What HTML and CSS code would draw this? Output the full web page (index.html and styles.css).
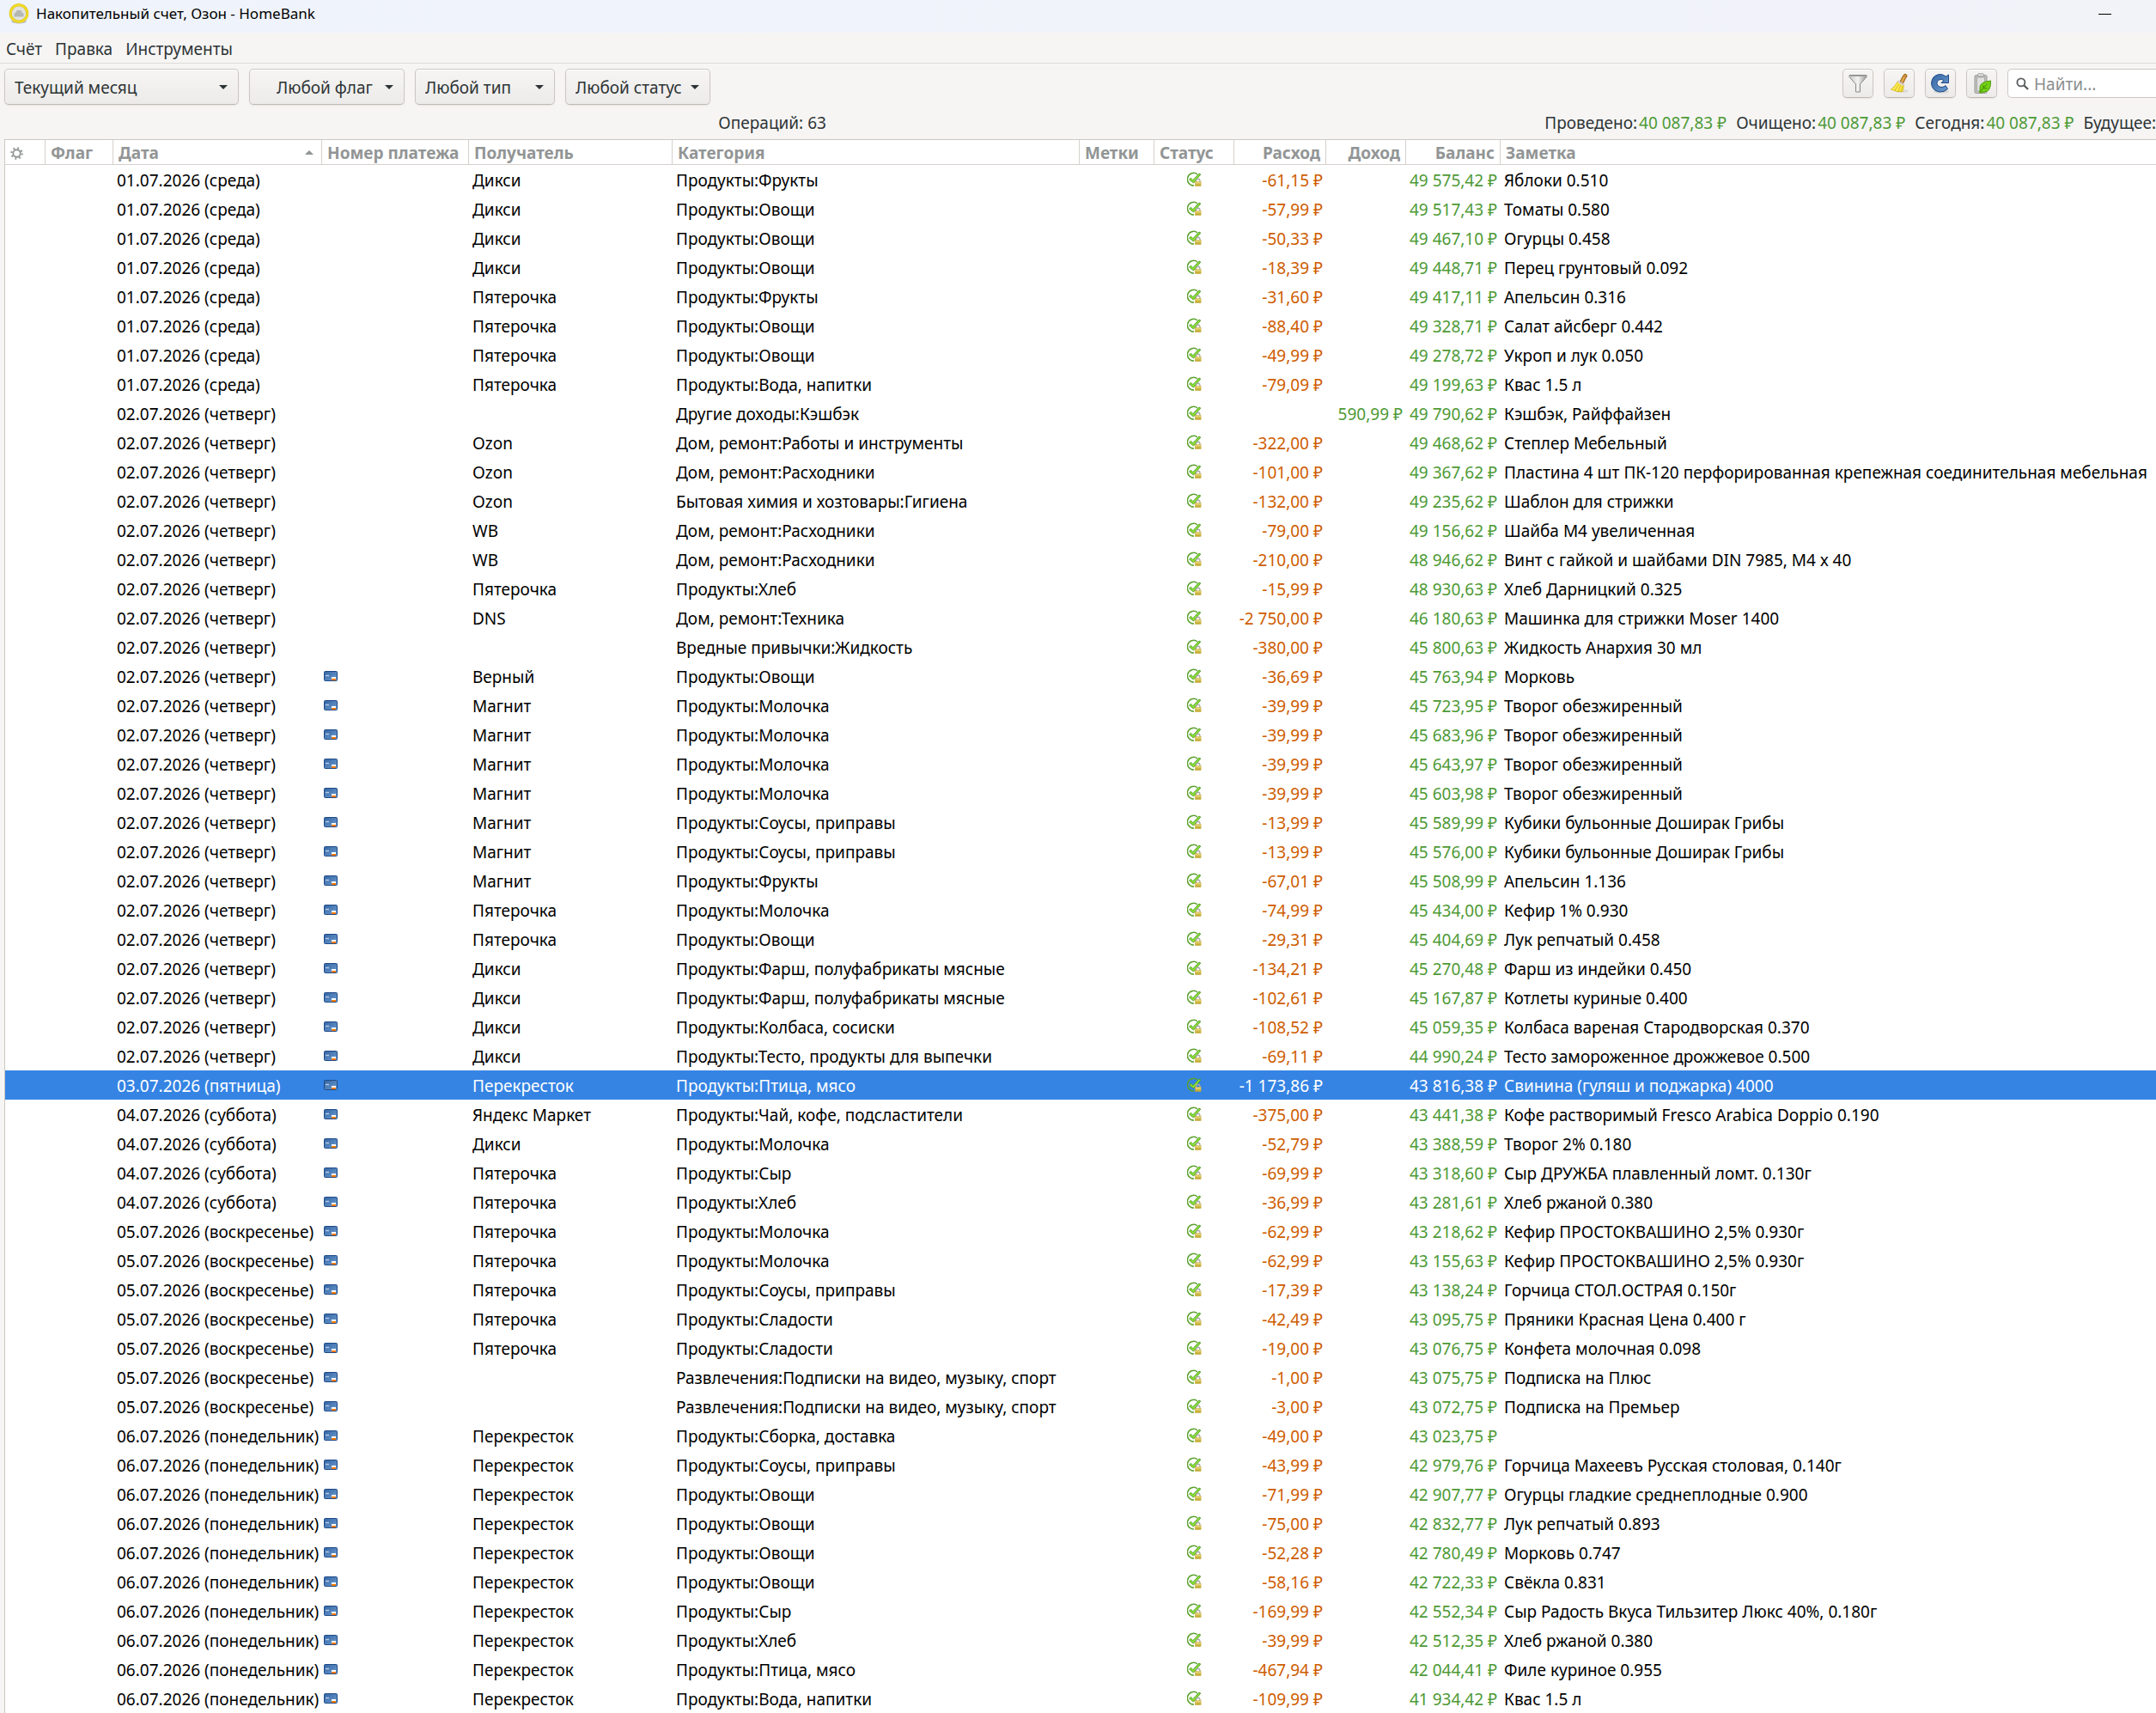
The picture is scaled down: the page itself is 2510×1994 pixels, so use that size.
FILE: index.html
```
<!DOCTYPE html>
<html lang="ru">

<head>
  <meta charset="UTF-8">
  <meta name="viewport" content="width=device-width, initial-scale=1">
  <title>Накопительный счет, Озон - HomeBank</title>
  <link rel="stylesheet" href="styles.css">
</head>

<body>
  <svg class="sprite" aria-hidden="true">
    <defs>
      <linearGradient id="blue" x1="0" y1="0" x2="1" y2="1">
        <stop offset="0" stop-color="#3465a4" />
        <stop offset="1" stop-color="#6d9ccf" />
      </linearGradient>
      <linearGradient id="steel" x1="0" y1="0" x2="1" y2="0">
        <stop offset="0" stop-color="#c8cac6" />
        <stop offset=".5" stop-color="#f4f4f2" />
        <stop offset="1" stop-color="#9a9c98" />
      </linearGradient>
      <linearGradient id="gold" x1="0" y1="0" x2="0" y2="1">
        <stop offset="0" stop-color="#f0e08a" />
        <stop offset="1" stop-color="#b8a01c" />
      </linearGradient>
    </defs>
    <symbol id="card" viewBox="0 0 16 12">
      <rect x=".5" y=".5" width="15" height="11" rx="1" fill="url(#blue)" stroke="#204a87" />
      <path d="M2 5.5h4" stroke="#b4cbe6" stroke-width="1.5" />
      <rect x="9" y="7" width="5" height="2" fill="#fff" />
      <rect x="9" y="9" width="5" height="2" fill="#f57900" />
    </symbol>
    <symbol id="check" viewBox="0 0 18 18">
      <path d="M12 2.800A7.300 7.300 0 1 0 8 16" fill="none" stroke="#5aa02c" stroke-width="1.500" />
      <path d="M2.500 9L4.500 7.300l2.300 2.400L14 2l1.800 1L7.500 13z" fill="#8ae234" stroke="#4e9a26" stroke-width=".9" />
      <path d="M10.500 12V10.500a2.200 2.200 0 0 1 4.400 0V12" fill="none" stroke="#a8a8a4" stroke-width="1.400" />
      <rect x="9.300" y="11.500" width="6.800" height="5" fill="url(#gold)" stroke="#c4a83a" stroke-width=".5" />
    </symbol>
  </svg>

  <header class="titlebar">
    <svg class="logo" viewBox="0 0 24 24">
      <ellipse cx="12" cy="21" rx="9" ry="2.500" fill="#c3c6cb" />
      <circle cx="12" cy="11.500" r="9.800" fill="#e2e3e0" stroke="#c9ae10" stroke-width="3" />
      <circle cx="12" cy="11.500" r="9.800" fill="none" stroke="#f2dc26" stroke-width="2.400" />
      <path d="M6.500 15.500v-4l2-1 1-2.500h5l1 2.500 2 1v4z" fill="#b5b7b3" />
    </svg>
    <h1>Накопительный счет, Озон - HomeBank</h1>
    <button class="minimize" aria-label="Свернуть"></button>
  </header>

  <nav class="menu">
    <a href="#">Счёт</a>
    <a href="#">Правка</a>
    <a href="#">Инструменты</a>
  </nav>

  <div class="toolbar">
    <div class="combo range"><select aria-label="Период"><option>Текущий месяц</option></select></div>
    <div class="combo flag"><select aria-label="Флаг"><option>Любой флаг</option></select></div>
    <div class="combo type"><select aria-label="Тип"><option>Любой тип</option></select></div>
    <div class="combo status"><select aria-label="Статус"><option>Любой статус</option></select></div>
    <div class="tools">
      <button class="tool" aria-label="Фильтр">
        <svg viewBox="0 0 24 24">
          <path d="M2 2.500h20v2L14.500 13v9h-5v-9L2 4.500z" fill="url(#steel)" stroke="#888a85" />
          <path d="M3.500 3.500h17" stroke="#a5a7a2" />
        </svg>
      </button>
      <button class="tool" aria-label="Сбросить фильтр">
        <svg viewBox="0 0 24 24">
          <ellipse cx="15" cy="21" rx="8" ry="2" fill="#dcdad6" />
          <path d="M13 10L17 2.500q2-2.500 3.500-.500t-1 4L16.500 12z" fill="#e0a24c" stroke="#8f5902" />
          <path d="M18.500 3.500l.5.500" stroke="#5c3566" stroke-width="1.500" />
          <path d="M10.500 9.500l7 4.500-1.500 7.500q-6 1-13.500-2.500 5-3 8-9.500z" fill="#fce94f" stroke="#d9bd20" />
          <path d="M12 13l-5 7M14 14l-3 7M16 15l-2 6" stroke="#d9bd20" fill="none" />
          <path d="M10.500 9.500l7 4.500" stroke="#d3c9d0" stroke-width="2.500" />
        </svg>
      </button>
      <button class="tool" aria-label="Обновить">
        <svg viewBox="0 0 24 24">
          <ellipse cx="13" cy="21.500" rx="9" ry="2" fill="#d5d3d0" />
          <path d="M21.500 2v9.500H13l3-3q-3-2-5.500-.500Q7.500 9.500 8 12.500q1 4 5 4 3.500 0 5-2l2.500 4q-4 4-9.500 3.500Q2 20.500 1.500 12 2 3 10.500 1.500q4-.500 8 2.500z" fill="url(#blue)" stroke="#204a87" />
        </svg>
      </button>
      <button class="tool" aria-label="Показать">
        <svg viewBox="0 0 24 24">
          <rect x="4" y="2.500" width="14" height="21" rx="1.500" fill="#bfc0bc" stroke="#999b97" />
          <rect x="6.500" y="5" width="9" height="16" fill="#dfe0dd" stroke="#aaaca8" />
          <rect x="7.500" y=".8" width="7" height="3" rx="1" fill="#e6e6e3" stroke="#999b97" />
          <path d="M22.500 9q.5 13-7.500 13-3 0-4 1.500l-1.500-1.500q1-1.500.500-4Q9 10.500 22.500 9z" fill="#73d216" stroke="#4e9a06" />
          <path d="M10 22.500q4-6 8.500-9.500M14 17.500v-3.500M14 17.500l4.500.5" stroke="#3f8a06" fill="none" />
        </svg>
      </button>
      <label class="search">
        <svg viewBox="0 0 16 16">
          <circle cx="6.300" cy="6.300" r="4.800" fill="none" stroke="#5a5d5e" stroke-width="2" />
          <path d="M10 10l5 5" stroke="#5a5d5e" stroke-width="2.400" />
        </svg>
        <input type="text" placeholder="Найти..." aria-label="Найти">
      </label>
    </div>
  </div>

  <div class="summary">
    <span class="count">Операций: 63</span>
    <div class="totals">
      <span>Проведено:<b>40 087,83 ₽</b></span>
      <span>Очищено:<b>40 087,83 ₽</b></span>
      <span>Сегодня:<b>40 087,83 ₽</b></span>
      <span>Будущее:</span>
    </div>
  </div>

  <table class="ledger">
    <colgroup>
      <col class="c-gear"><col class="c-flag"><col class="c-date"><col class="c-number"><col class="c-payee"><col class="c-category">
      <col class="c-tags"><col class="c-status"><col class="c-expense"><col class="c-income"><col class="c-balance"><col>
    </colgroup>
    <thead>
      <tr>
        <th>
          <svg class="gear" viewBox="0 0 16 16" fill="none" stroke="#929595">
            <circle cx="8" cy="8" r="4.500" stroke-width="2" />
            <circle cx="8" cy="8" r="6.600" stroke-width="2.400" stroke-dasharray="2 3.184" />
          </svg>
        </th>
        <th>Флаг</th>
        <th class="sorted">Дата</th>
        <th>Номер платежа</th>
        <th>Получатель</th>
        <th>Категория</th>
        <th>Метки</th>
        <th>Статус</th>
        <th class="num">Расход</th>
        <th class="num">Доход</th>
        <th class="num">Баланс</th>
        <th>Заметка</th>
      </tr>
    </thead>
    <tbody id="rows"></tbody>
  </table>
  <script src="script.js"></script>
</body>

</html>
```
FILE: styles.css
```
* {
  box-sizing: border-box;
  margin: 0;
  padding: 0;
}

body {
  background: #f6f5f4;
  color: #2e3436;
  font-family: "Noto Sans", "Open Sans", sans-serif;
  font-size: 19px;
  line-height: 26px;
  overflow-x: hidden;
}

button,
select,
input {
  font: inherit;
  color: inherit;
}

svg {
  display: block;
}

.sprite {
  position: absolute;
  width: 0;
  height: 0;
}

/* title bar */
.titlebar {
  display: flex;
  align-items: center;
  height: 38px;
  padding: 0 52px 6px 10px;
  background: linear-gradient(to right, #eff3fb, #f1f3f9);
  color: #000;
}

.logo {
  width: 24px;
  height: 24px;
  margin-right: 8px;
}

.titlebar h1 {
  font-size: 17px;
  font-weight: normal;
}

.minimize {
  width: 15px;
  height: 1px;
  margin-left: auto;
  border: none;
  background: #000;
}

/* menu */
.menu {
  display: flex;
  gap: 15px;
  height: 36px;
  padding: 6px 7px 0;
  border-bottom: 1px solid #dcdad7;
}

.menu a {
  color: inherit;
  text-decoration: none;
}

/* toolbar */
.toolbar {
  display: flex;
  gap: 12px;
  padding: 6px 0 0 5px;
}

.combo {
  position: relative;
  height: 42px;
}

.combo select {
  appearance: none;
  width: 100%;
  height: 100%;
  padding: 2px 11px 0;
  border: 1px solid #cdc7c2;
  border-bottom-color: #bfb8b1;
  border-radius: 5px;
  background: linear-gradient(#f6f5f4, #edebe9);
  box-shadow: inset 0 1px #fff, 0 1px 2px rgba(0, 0, 0, 0.07);
}

.combo::after {
  content: "";
  position: absolute;
  right: 13px;
  top: 19px;
  border: 5px solid transparent;
  border-top-color: #2e3436;
  border-bottom: none;
}

.range {
  width: 273px;
}

.flag {
  width: 181px;
}

.flag select {
  padding-left: 31px;
}

.type {
  width: 163px;
}

.status {
  width: 169px;
}

.tools {
  display: flex;
  gap: 12px;
  height: 34px;
  margin-left: auto;
}

.tool {
  width: 36px;
  padding: 0 5px;
  border: 1px solid #cdc7c2;
  border-bottom-color: #bfb8b1;
  border-radius: 5px;
  background: linear-gradient(#f6f5f4, #edebe9);
  box-shadow: inset 0 1px #fff, 0 1px 2px rgba(0, 0, 0, 0.07);
}

.tool svg {
  width: 24px;
  height: 24px;
}

.search {
  display: flex;
  align-items: center;
  gap: 6px;
  width: 173px;
  padding-left: 9px;
  border: 1px solid #cdc7c2;
  border-right: none;
  border-radius: 5px 0 0 5px;
  background: #fff;
}

.search svg {
  width: 15px;
  height: 15px;
}

.search input {
  width: 130px;
  padding-top: 2px;
  border: none;
  outline: none;
  background: none;
}

.search input::placeholder {
  color: #8b8e8f;
}

/* summary line */
.summary {
  display: flex;
  padding: 8px 0 6px;
}

.count {
  flex: 1;
  text-align: center;
}

.totals {
  display: flex;
  gap: 11px;
  white-space: nowrap;
}

.totals b {
  margin-left: 2px;
  font-weight: normal;
  color: #4e9a36;
}

/* operations */
.ledger {
  width: calc(100% - 5px);
  margin-left: 5px;
  table-layout: fixed;
  border-collapse: separate;
  border-spacing: 0;
  border-top: 1px solid #cdc7c2;
  border-left: 1px solid #cdc7c2;
  background: #fff;
  color: #000;
}

.c-gear { width: 47px; }
.c-flag { width: 79px; }
.c-date { width: 243px; }
.c-number { width: 171px; }
.c-payee { width: 237px; }
.c-category { width: 474px; }
.c-tags { width: 87px; }
.c-status { width: 93px; }
.c-expense { width: 107px; }
.c-income { width: 93px; }
.c-balance { width: 110px; }

.ledger th {
  height: 29px;
  padding: 2px 6px 0;
  border-right: 1px solid #d5d0cc;
  border-bottom: 1px solid #d5d0cc;
  line-height: 26px;
  text-align: left;
  white-space: nowrap;
  color: #929595;
}

.ledger th:last-child {
  border-right: none;
}

.ledger td {
  height: 34px;
  padding: 2px 4px 0;
  line-height: 32px;
  white-space: nowrap;
  overflow: hidden;
}

.gear {
  width: 15px;
  height: 15px;
}

.sorted::after {
  content: "";
  float: right;
  margin: 10px 3px 0 0;
  border: 5px solid transparent;
  border-bottom-color: #929595;
  border-top: none;
}

.ledger .num {
  text-align: right;
}

.ledger .expense {
  color: #ce5c00;
}

.ledger .income {
  color: #4e9a36;
}

.card {
  width: 16px;
  height: 12px;
  margin-left: -2px;
}

.check {
  width: 18px;
  height: 18px;
  margin: 0 auto;
}

.ledger .icon {
  padding-top: 0;
}

.ledger .selected td {
  background: #3584e4;
  color: #fff;
}
```
FILE: script.js
```
// date, payee, category, amount, balance, note
var operations = [
  ["01", "Дикси", "Продукты:Фрукты", "-61,15", "49 575,42", "Яблоки 0.510"],
  ["01", "Дикси", "Продукты:Овощи", "-57,99", "49 517,43", "Томаты 0.580"],
  ["01", "Дикси", "Продукты:Овощи", "-50,33", "49 467,10", "Огурцы 0.458"],
  ["01", "Дикси", "Продукты:Овощи", "-18,39", "49 448,71", "Перец грунтовый 0.092"],
  ["01", "Пятерочка", "Продукты:Фрукты", "-31,60", "49 417,11", "Апельсин 0.316"],
  ["01", "Пятерочка", "Продукты:Овощи", "-88,40", "49 328,71", "Салат айсберг 0.442"],
  ["01", "Пятерочка", "Продукты:Овощи", "-49,99", "49 278,72", "Укроп и лук 0.050"],
  ["01", "Пятерочка", "Продукты:Вода, напитки", "-79,09", "49 199,63", "Квас 1.5 л"],
  ["02", "", "Другие доходы:Кэшбэк", "590,99", "49 790,62", "Кэшбэк, Райффайзен"],
  ["02", "Ozon", "Дом, ремонт:Работы и инструменты", "-322,00", "49 468,62", "Степлер Мебельный"],
  ["02", "Ozon", "Дом, ремонт:Расходники", "-101,00", "49 367,62", "Пластина 4 шт ПК-120 перфорированная крепежная соединительная мебельная"],
  ["02", "Ozon", "Бытовая химия и хозтовары:Гигиена", "-132,00", "49 235,62", "Шаблон для стрижки"],
  ["02", "WB", "Дом, ремонт:Расходники", "-79,00", "49 156,62", "Шайба М4 увеличенная"],
  ["02", "WB", "Дом, ремонт:Расходники", "-210,00", "48 946,62", "Винт с гайкой и шайбами DIN 7985, М4 х 40"],
  ["02", "Пятерочка", "Продукты:Хлеб", "-15,99", "48 930,63", "Хлеб Дарницкий 0.325"],
  ["02", "DNS", "Дом, ремонт:Техника", "-2 750,00", "46 180,63", "Машинка для стрижки Moser 1400"],
  ["02", "", "Вредные привычки:Жидкость", "-380,00", "45 800,63", "Жидкость Анархия 30 мл"],
  ["02", "Верный", "Продукты:Овощи", "-36,69", "45 763,94", "Морковь"],
  ["02", "Магнит", "Продукты:Молочка", "-39,99", "45 723,95", "Творог обезжиренный"],
  ["02", "Магнит", "Продукты:Молочка", "-39,99", "45 683,96", "Творог обезжиренный"],
  ["02", "Магнит", "Продукты:Молочка", "-39,99", "45 643,97", "Творог обезжиренный"],
  ["02", "Магнит", "Продукты:Молочка", "-39,99", "45 603,98", "Творог обезжиренный"],
  ["02", "Магнит", "Продукты:Соусы, приправы", "-13,99", "45 589,99", "Кубики бульонные Доширак Грибы"],
  ["02", "Магнит", "Продукты:Соусы, приправы", "-13,99", "45 576,00", "Кубики бульонные Доширак Грибы"],
  ["02", "Магнит", "Продукты:Фрукты", "-67,01", "45 508,99", "Апельсин 1.136"],
  ["02", "Пятерочка", "Продукты:Молочка", "-74,99", "45 434,00", "Кефир 1% 0.930"],
  ["02", "Пятерочка", "Продукты:Овощи", "-29,31", "45 404,69", "Лук репчатый 0.458"],
  ["02", "Дикси", "Продукты:Фарш, полуфабрикаты мясные", "-134,21", "45 270,48", "Фарш из индейки 0.450"],
  ["02", "Дикси", "Продукты:Фарш, полуфабрикаты мясные", "-102,61", "45 167,87", "Котлеты куриные 0.400"],
  ["02", "Дикси", "Продукты:Колбаса, сосиски", "-108,52", "45 059,35", "Колбаса вареная Стародворская 0.370"],
  ["02", "Дикси", "Продукты:Тесто, продукты для выпечки", "-69,11", "44 990,24", "Тесто замороженное дрожжевое 0.500"],
  ["03", "Перекресток", "Продукты:Птица, мясо", "-1 173,86", "43 816,38", "Свинина (гуляш и поджарка) 4000"],
  ["04", "Яндекс Маркет", "Продукты:Чай, кофе, подсластители", "-375,00", "43 441,38", "Кофе растворимый Fresco Arabica Doppio 0.190"],
  ["04", "Дикси", "Продукты:Молочка", "-52,79", "43 388,59", "Творог 2% 0.180"],
  ["04", "Пятерочка", "Продукты:Сыр", "-69,99", "43 318,60", "Сыр ДРУЖБА плавленный ломт. 0.130г"],
  ["04", "Пятерочка", "Продукты:Хлеб", "-36,99", "43 281,61", "Хлеб ржаной 0.380"],
  ["05", "Пятерочка", "Продукты:Молочка", "-62,99", "43 218,62", "Кефир ПРОСТОКВАШИНО 2,5% 0.930г"],
  ["05", "Пятерочка", "Продукты:Молочка", "-62,99", "43 155,63", "Кефир ПРОСТОКВАШИНО 2,5% 0.930г"],
  ["05", "Пятерочка", "Продукты:Соусы, приправы", "-17,39", "43 138,24", "Горчица СТОЛ.ОСТРАЯ 0.150г"],
  ["05", "Пятерочка", "Продукты:Сладости", "-42,49", "43 095,75", "Пряники Красная Цена 0.400 г"],
  ["05", "Пятерочка", "Продукты:Сладости", "-19,00", "43 076,75", "Конфета молочная 0.098"],
  ["05", "", "Развлечения:Подписки на видео, музыку, спорт", "-1,00", "43 075,75", "Подписка на Плюс"],
  ["05", "", "Развлечения:Подписки на видео, музыку, спорт", "-3,00", "43 072,75", "Подписка на Премьер"],
  ["06", "Перекресток", "Продукты:Сборка, доставка", "-49,00", "43 023,75", ""],
  ["06", "Перекресток", "Продукты:Соусы, приправы", "-43,99", "42 979,76", "Горчица Махеевъ Русская столовая, 0.140г"],
  ["06", "Перекресток", "Продукты:Овощи", "-71,99", "42 907,77", "Огурцы гладкие среднеплодные 0.900"],
  ["06", "Перекресток", "Продукты:Овощи", "-75,00", "42 832,77", "Лук репчатый 0.893"],
  ["06", "Перекресток", "Продукты:Овощи", "-52,28", "42 780,49", "Морковь 0.747"],
  ["06", "Перекресток", "Продукты:Овощи", "-58,16", "42 722,33", "Свёкла 0.831"],
  ["06", "Перекресток", "Продукты:Сыр", "-169,99", "42 552,34", "Сыр Радость Вкуса Тильзитер Люкс 40%, 0.180г"],
  ["06", "Перекресток", "Продукты:Хлеб", "-39,99", "42 512,35", "Хлеб ржаной 0.380"],
  ["06", "Перекресток", "Продукты:Птица, мясо", "-467,94", "42 044,41", "Филе куриное 0.955"],
  ["06", "Перекресток", "Продукты:Вода, напитки", "-109,99", "41 934,42", "Квас 1.5 л"]
];

var weekdays = {
  "01": "среда",
  "02": "четверг",
  "03": "пятница",
  "04": "суббота",
  "05": "воскресенье",
  "06": "понедельник"
};

var firstCard = 17;
var selected = 31;

function icon(name) {
  return '<svg class="' + name + '"><use href="#' + name + '"/></svg>';
}

function cell(cls, text) {
  return '<td class="' + cls + '">' + text + '</td>';
}

var html = "";
for (var i = 0; i < operations.length; i++) {
  var op = operations[i];
  var amount = op[3] + " ₽";
  var isExpense = op[3].charAt(0) == "-";
  html += '<tr' + (i == selected ? ' class="selected"' : '') + '>';
  html += '<td></td><td></td>';
  html += '<td>' + op[0] + '.07.2026 (' + weekdays[op[0]] + ')</td>';
  html += cell("icon", i >= firstCard ? icon("card") : "");
  html += '<td>' + op[1] + '</td>';
  html += '<td>' + op[2] + '</td>';
  html += '<td></td>';
  html += cell("icon", icon("check"));
  html += cell("num expense", isExpense ? amount : "");
  html += cell("num income", isExpense ? "" : amount);
  html += cell("num income", op[4] + " ₽");
  html += '<td>' + op[5] + '</td>';
  html += '</tr>';
}
document.getElementById("rows").innerHTML = html;
```
